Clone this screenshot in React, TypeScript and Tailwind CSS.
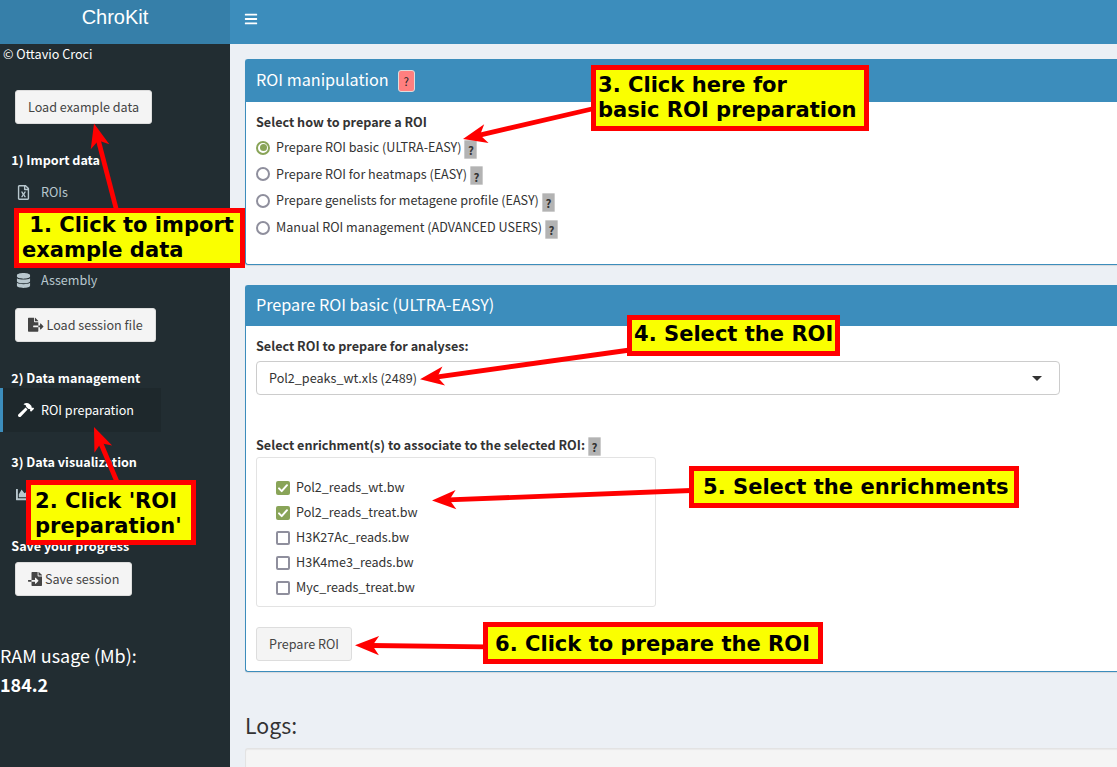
import type { ReactNode } from "react";
import {
  FaBars,
  FaChartArea,
  FaDatabase,
  FaFileExport,
  FaFileImport,
  FaHammer,
  FaRegFileExcel,
} from "react-icons/fa";

function Help({ className = "" }: { className?: string }) {
  return (
    <span
      className={`flex h-[19px] w-[13px] shrink-0 items-center justify-center rounded-[1px] border border-[#cccccc] bg-[#b3b3b3] pt-[3px] text-[11.5px] leading-none font-bold text-[#333] ${className}`}
    >
      ?
    </span>
  );
}

function SideLabel({ children, className = "" }: { children: ReactNode; className?: string }) {
  return <div className={`flex items-center pl-[11.3px] font-bold text-white ${className}`}>{children}</div>;
}

function SideItem({ icon, label, active = false }: { icon: ReactNode; label: string; active?: boolean }) {
  return (
    <div
      className={`flex h-11 items-center border-l-[3px] ${
        active ? "w-[161px] border-[#3c8dbc] bg-[#1e282c] pl-[15px] text-white" : "border-transparent pl-[13px] text-[#b8c7ce]"
      }`}
    >
      <span className={`flex items-center text-[15px] ${active ? "w-[23px]" : "w-[25px]"}`}>{icon}</span>
      {label}
    </div>
  );
}

function Button({ children, className = "" }: { children: ReactNode; className?: string }) {
  return (
    <button
      className={`flex h-[34px] shrink-0 items-center rounded-[3px] border border-[#ddd] bg-[#f4f4f4] px-3 whitespace-nowrap text-[#444] ${className}`}
    >
      {children}
    </button>
  );
}

const methods = [
  { label: "Prepare ROI basic (ULTRA-EASY)", checked: true },
  { label: "Prepare ROI for heatmaps (EASY)", checked: false },
  { label: "Prepare genelists for metagene profile (EASY)", checked: false },
  { label: "Manual ROI management (ADVANCED USERS)", checked: false },
];

const enrichments = [
  { label: "Pol2_reads_wt.bw", checked: true },
  { label: "Pol2_reads_treat.bw", checked: true },
  { label: "H3K27Ac_reads.bw", checked: false },
  { label: "H3K4me3_reads.bw", checked: false },
  { label: "Myc_reads_treat.bw", checked: false },
];

function Radio({ checked }: { checked: boolean }) {
  return (
    <span
      className={`mt-px flex size-[14px] shrink-0 items-center justify-center rounded-full border-2 bg-white ${
        checked ? "border-[#89a458]" : "border-[#8f8f9d]"
      }`}
    >
      {checked && <span className="size-[7px] rounded-full bg-[#89a458]" />}
    </span>
  );
}

function Checkbox({ checked }: { checked: boolean }) {
  return (
    <span
      className={`mt-[3px] flex size-[14px] shrink-0 items-center justify-center rounded-[2px] ${
        checked ? "bg-[#89a458]" : "border-2 border-[#8f8f9d] bg-white"
      }`}
    >
      {checked && (
        <svg viewBox="0 0 14 14" className="size-[14px]">
          <path d="M3 7.4 L5.7 10.1 L11 4.2" fill="none" stroke="#fff" strokeWidth="2" strokeLinecap="round" strokeLinejoin="round" />
        </svg>
      )}
    </span>
  );
}

/** Each arrow runs from its note (x2, y2) to the control it points at (x1, y1). */
const arrows = [
  { x1: 94, y1: 123.5, x2: 117, y2: 212 },
  { x1: 94, y1: 427, x2: 117.5, y2: 483 },
  { x1: 463, y1: 139, x2: 594, y2: 108.5 },
  { x1: 420, y1: 379.3, x2: 630, y2: 350 },
  { x1: 432, y1: 500.5, x2: 691, y2: 490.5 },
  { x1: 355, y1: 645.3, x2: 486, y2: 646.8 },
];

function Arrows() {
  return (
    <svg className="pointer-events-none absolute inset-0" width="1117" height="767" fill="#f00">
      {arrows.map((a) => {
        const length = Math.hypot(a.x2 - a.x1, a.y2 - a.y1);
        const angle = (Math.atan2(a.y2 - a.y1, a.x2 - a.x1) * 180) / Math.PI;
        return (
          <g key={a.y1} transform={`translate(${a.x1} ${a.y1}) rotate(${angle})`}>
            <path d="M0 0 L24 -9.6 L17.5 0 L24 9.6 Z" />
            <rect x="16" y="-2.4" width={length - 16} height="4.8" />
          </g>
        );
      })}
    </svg>
  );
}

function Note({ children, className }: { children: ReactNode; className: string }) {
  return (
    <div
      className={`absolute border-[5px] border-[#f00] bg-[#faff00] font-['DejaVu_Sans',sans-serif] text-[21.06px] leading-[25px] font-bold whitespace-pre text-black ${className}`}
    >
      {children}
    </div>
  );
}

export default function App() {
  return (
    <div className="relative flex h-[767px] w-[1117px] flex-col overflow-hidden bg-[#ecf0f5] font-['Noto_Sans_CJK_SC',sans-serif] text-[12.6px] leading-[18px] text-[#333]">
      <header className="flex h-11 shrink-0 text-white">
        <div className="flex w-[230px] justify-center bg-[#367fa9] pt-[5px] font-['Liberation_Sans',sans-serif] text-[20px] leading-[24px]">
          ChroKit
        </div>
        <div className="flex flex-1 items-center bg-[#3c8dbc] pb-[7px] pl-[14px]">
          <FaBars className="text-[14px]" />
        </div>
      </header>

      <div className="flex min-h-0 flex-1">
        <aside className="flex w-[230px] shrink-0 flex-col bg-[#222d32]">
          <div className="h-[46px] pt-px pl-[3px] text-white">© Ottavio Croci</div>
          <Button className="ml-[15px] self-start">Load example data</Button>
          <SideLabel className="h-[46px] pt-[26px]">1) Import data</SideLabel>
          <SideItem icon={<FaRegFileExcel />} label="ROIs" />
          <div className="h-11" />
          <SideItem icon={<FaDatabase />} label="Assembly" />
          <Button className="mt-[6px] ml-[15px] self-start">
            <FaFileExport className="mr-[3px] text-[15.5px]" />
            Load session file
          </Button>
          <SideLabel className="h-[46px] pt-[26px]">2) Data management</SideLabel>
          <SideItem icon={<FaHammer className="text-[16px]" />} label="ROI preparation" active />
          <SideLabel className="h-10 pt-5">3) Data visualization</SideLabel>
          <SideItem icon={<FaChartArea />} label="" />
          <SideLabel className="h-[46px] pt-[14px]">Save your progress</SideLabel>
          <Button className="ml-[15px] self-start">
            <FaFileImport className="mr-[3px] text-[14px]" />
            Save session
          </Button>
          <div className="mt-[45px] text-[17.95px] leading-[29px] text-white">
            <div>RAM usage (Mb):</div>
            <div className="font-bold">184.2</div>
          </div>
        </aside>

        <main className="flex min-w-0 flex-1 flex-col pt-[15px] pl-[15px]">
          <section className="h-[206px] shrink-0 rounded-l-[3px] border border-r-0 border-[#3c8dbc] bg-white shadow-[0_1px_1px_rgba(0,0,0,0.1)]">
            <div className="flex h-[42px] items-center bg-[#3c8dbc] pb-[4px] pl-[10px] text-[16.2px] text-white">
              ROI manipulation
              <span className="mt-[3px] ml-[9px] flex h-[22px] w-[17px] items-center justify-center rounded-[3px] border border-[#ddd] bg-[#ff7f7f] text-[11.5px] text-[#222]">
                ?
              </span>
            </div>
            <div className="pl-[10px]">
              <div className="pt-[11px] font-bold">Select how to prepare a ROI</div>
              <div className="pt-[3px]">
                {methods.map((m) => (
                  <div key={m.label} className="flex h-[26.6px] items-center">
                    <Radio checked={m.checked} />
                    <span className="ml-[6px]">{m.label}</span>
                    <Help className="mt-[4px] ml-[3px]" />
                  </div>
                ))}
              </div>
            </div>
          </section>

          <section className="mt-5 h-[387px] shrink-0 rounded-l-[3px] border border-r-0 border-[#3c8dbc] bg-white shadow-[0_1px_1px_rgba(0,0,0,0.1)]">
            <div className="flex h-10 items-center bg-[#3c8dbc] pb-[4px] pl-[10px] text-[16.2px] text-white">
              Prepare ROI basic (ULTRA-EASY)
            </div>
            <div className="pl-[10px]">
              <div className="pt-[11px] font-bold">Select ROI to prepare for analyses:</div>
              <div className="mt-[6px] flex h-[34px] w-[804px] items-center justify-between rounded-[4px] border border-[#ccc] pr-[17px] pl-3">
                Pol2_peaks_wt.xls (2489)
                <svg width="10" height="5" fill="#333">
                  <path d="M0 0 H10 L5 5 Z" />
                </svg>
              </div>
              <div className="mt-[41px] flex h-[21px] items-start font-bold">
                Select enrichment(s) to associate to the selected ROI:
                <Help className="mt-px ml-[3px]" />
              </div>
              <div className="h-[150px] w-[400px] rounded-[3px] border border-[#e3e3e3] pt-[16px] pl-[19px]">
                {enrichments.map((e) => (
                  <div key={e.label} className="flex h-[25px] items-center">
                    <Checkbox checked={e.checked} />
                    <span className="ml-[6px]">{e.label}</span>
                  </div>
                ))}
              </div>
              <Button className="mt-5">Prepare ROI</Button>
            </div>
          </section>

          <h2 className="mt-[39px] text-[21.3px] leading-[28px]">Logs:</h2>
          <div className="mt-[9px] h-[60px] shrink-0 rounded-l-[3px] border border-r-0 border-[#e3e3e3] bg-[#f5f5f5] shadow-[inset_0_1px_1px_rgba(0,0,0,0.05)]" />
        </main>
      </div>

      <Arrows />
      <Note className="top-[208px] left-[14px] h-[60px] w-[231px] pl-[3px]">
        <div className="-mt-px">{" 1. Click to import\nexample data"}</div>
      </Note>
      <Note className="top-[480px] left-[26px] h-[65px] w-[170px] pt-[3px] pl-[4px]">{"2. Click 'ROI\npreparation'"}</Note>
      <Note className="top-[65px] left-[591px] h-[66px] w-[278px] pt-[2px] pl-[2px]">{"3. Click here for\nbasic ROI preparation"}</Note>
      <Note className="top-[315px] left-[627px] h-[41px] w-[213px] pt-px pl-[2px]">4. Select the ROI</Note>
      <Note className="top-[466px] left-[689px] h-[42px] w-[330px] pt-[3px] pl-[9px]">5. Select the enrichments</Note>
      <Note className="top-[622px] left-[483px] h-[42px] w-[340px] pt-[4px] pl-[7px]">6. Click to prepare the ROI</Note>
    </div>
  );
}
